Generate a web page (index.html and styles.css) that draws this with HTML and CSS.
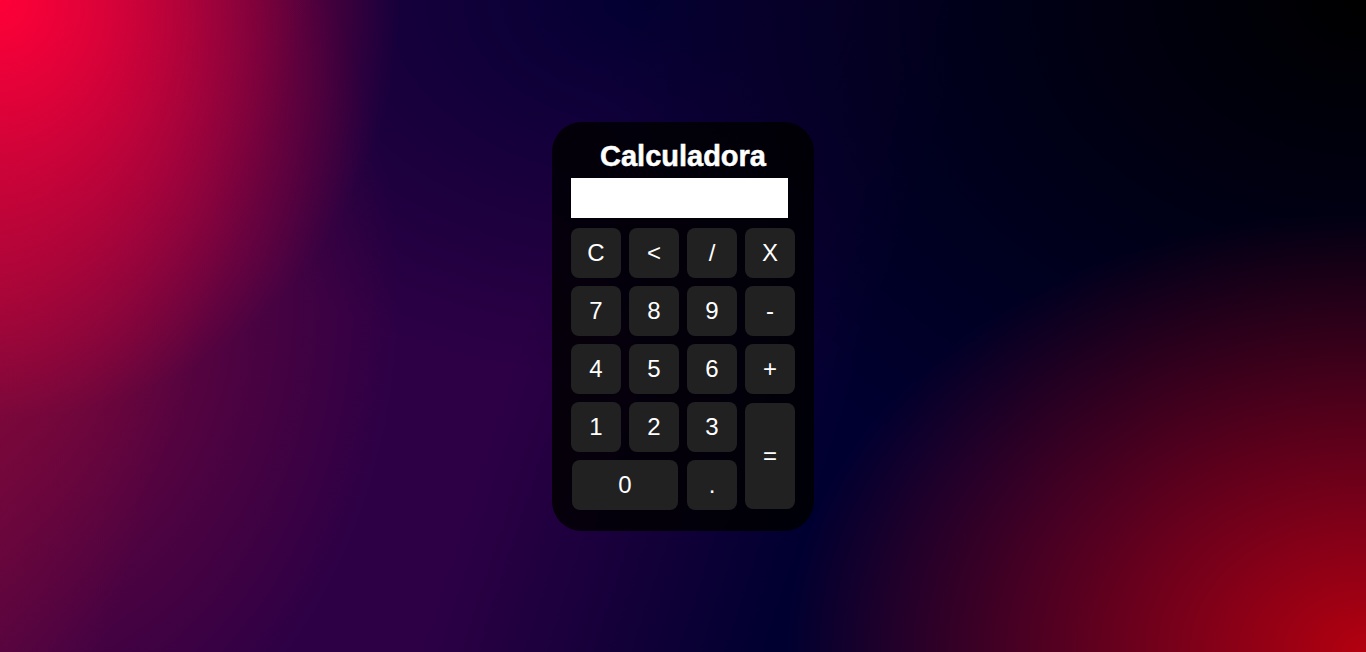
FILE: index.html
```html
<!DOCTYPE html>
<html lang="pt-BR">
<head>
<meta charset="utf-8">
<title>Calculadora</title>
<link rel="stylesheet" href="styles.css">
</head>
<body>
  <main class="calc">
    <h1 class="calc-title">Calculadora</h1>
    <div class="calc-display"></div>
    <div class="calc-keys">
      <button class="key">C</button>
      <button class="key">&lt;</button>
      <button class="key">/</button>
      <button class="key">X</button>
      <button class="key">7</button>
      <button class="key">8</button>
      <button class="key">9</button>
      <button class="key">-</button>
      <button class="key">4</button>
      <button class="key">5</button>
      <button class="key">6</button>
      <button class="key">+</button>
      <button class="key">1</button>
      <button class="key">2</button>
      <button class="key">3</button>
      <button class="key key-equals">=</button>
      <button class="key key-zero">0</button>
      <button class="key">.</button>
    </div>
  </main>
</body>
</html>
```
FILE: styles.css
```css
html, body {
  margin: 0;
  height: 100%;
}

body {
  display: flex;
  align-items: center;
  justify-content: center;
  font-family: "Liberation Sans", Arial, sans-serif;
  background:
    radial-gradient(ellipse 580px 440px at 100% 100%, #b4000f 0%, rgba(180, 0, 15, 0) 100%),
    radial-gradient(ellipse 760px 560px at 100% 0%, #000 0%, rgba(0, 0, 0, 0) 100%),
    radial-gradient(ellipse 400px 420px at 0 0, #ff0038 0%, rgba(255, 0, 56, 0) 100%),
    radial-gradient(ellipse 400px 520px at 0 45%, rgba(140, 8, 56, 0.85) 0%, rgba(140, 8, 56, 0) 100%),
    radial-gradient(ellipse 540px 380px at 47% 0, rgba(0, 0, 50, 0.95) 0%, rgba(0, 0, 50, 0) 100%),
    linear-gradient(108deg, #7a0a3a 0%, #2d0045 20%, #2d0045 40%, #000030 62%, #000030 100%);
}

.calc {
  width: 262px;
  box-sizing: border-box;
  padding: 18px 19px 21px 19px;
  background: rgba(0, 0, 0, 0.82);
  border-radius: 30px;
  display: flex;
  flex-direction: column;
}

.calc-title {
  margin: 0 0 6px;
  text-align: center;
  color: #fff;
  font-size: 29px;
  font-weight: bold;
  line-height: 32px;
  -webkit-text-stroke: 0.5px #fff;
}

.calc-display {
  width: 217px;
  height: 40px;
  background: #fff;
  margin-bottom: 10px;
}

.calc-keys {
  display: grid;
  grid-template-columns: repeat(4, 50px);
  grid-auto-rows: 50px;
  gap: 8px;
}

.key {
  width: 50px;
  height: 50px;
  border: none;
  border-radius: 8px;
  background: #212121;
  color: #fff;
  font-family: "Liberation Sans", Arial, sans-serif;
  font-size: 24px;
  padding: 0;
  align-self: center;
  justify-self: center;
}

.key-equals {
  grid-column: 4;
  grid-row: 4 / span 2;
  height: 106px;
}

.key-zero {
  grid-column: 1 / span 2;
  width: 106px;
}
```
